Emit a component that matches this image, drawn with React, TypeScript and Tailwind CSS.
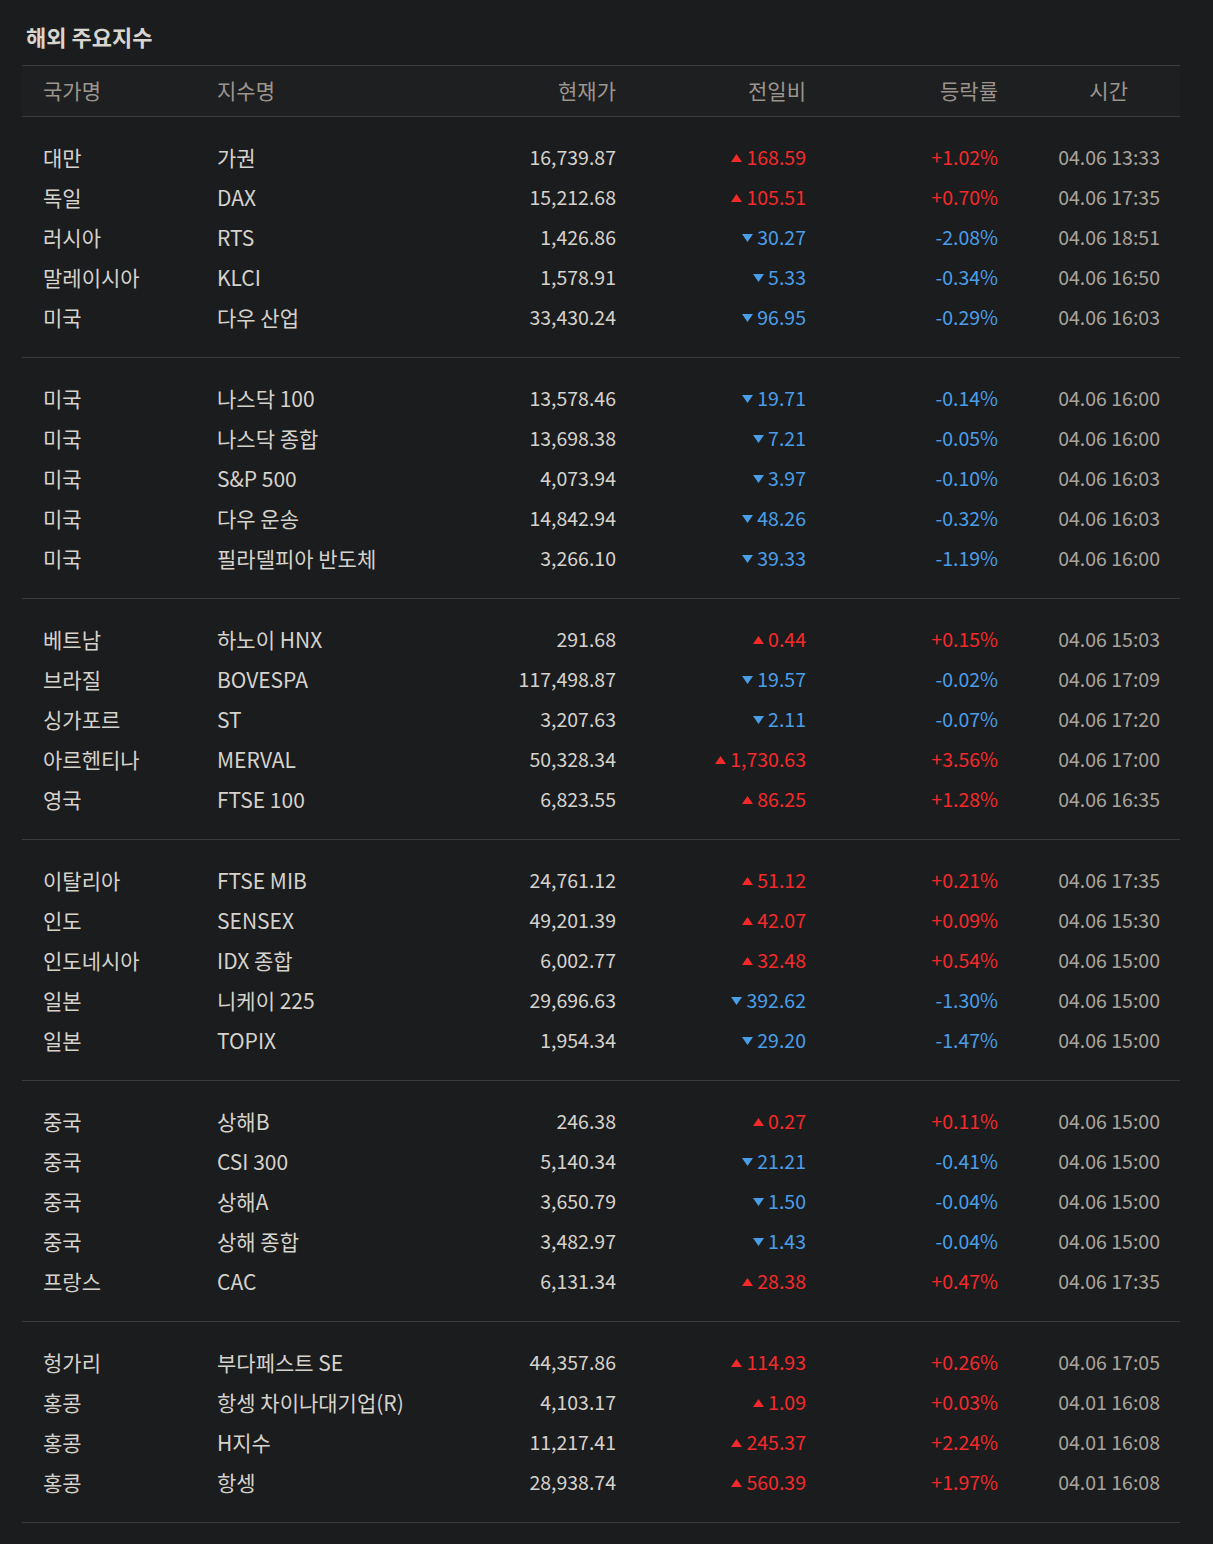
import React from 'react';

type Row = {
  country: string;
  name: string;
  price: string;
  change: string;
  rate: string;
  time: string;
};

const groups: Row[][] = [
  [
    { country: '대만', name: '가권', price: '16,739.87', change: '168.59', rate: '+1.02%', time: '04.06 13:33' },
    { country: '독일', name: 'DAX', price: '15,212.68', change: '105.51', rate: '+0.70%', time: '04.06 17:35' },
    { country: '러시아', name: 'RTS', price: '1,426.86', change: '30.27', rate: '-2.08%', time: '04.06 18:51' },
    { country: '말레이시아', name: 'KLCI', price: '1,578.91', change: '5.33', rate: '-0.34%', time: '04.06 16:50' },
    { country: '미국', name: '다우 산업', price: '33,430.24', change: '96.95', rate: '-0.29%', time: '04.06 16:03' },
  ],
  [
    { country: '미국', name: '나스닥 100', price: '13,578.46', change: '19.71', rate: '-0.14%', time: '04.06 16:00' },
    { country: '미국', name: '나스닥 종합', price: '13,698.38', change: '7.21', rate: '-0.05%', time: '04.06 16:00' },
    { country: '미국', name: 'S&P 500', price: '4,073.94', change: '3.97', rate: '-0.10%', time: '04.06 16:03' },
    { country: '미국', name: '다우 운송', price: '14,842.94', change: '48.26', rate: '-0.32%', time: '04.06 16:03' },
    { country: '미국', name: '필라델피아 반도체', price: '3,266.10', change: '39.33', rate: '-1.19%', time: '04.06 16:00' },
  ],
  [
    { country: '베트남', name: '하노이 HNX', price: '291.68', change: '0.44', rate: '+0.15%', time: '04.06 15:03' },
    { country: '브라질', name: 'BOVESPA', price: '117,498.87', change: '19.57', rate: '-0.02%', time: '04.06 17:09' },
    { country: '싱가포르', name: 'ST', price: '3,207.63', change: '2.11', rate: '-0.07%', time: '04.06 17:20' },
    { country: '아르헨티나', name: 'MERVAL', price: '50,328.34', change: '1,730.63', rate: '+3.56%', time: '04.06 17:00' },
    { country: '영국', name: 'FTSE 100', price: '6,823.55', change: '86.25', rate: '+1.28%', time: '04.06 16:35' },
  ],
  [
    { country: '이탈리아', name: 'FTSE MIB', price: '24,761.12', change: '51.12', rate: '+0.21%', time: '04.06 17:35' },
    { country: '인도', name: 'SENSEX', price: '49,201.39', change: '42.07', rate: '+0.09%', time: '04.06 15:30' },
    { country: '인도네시아', name: 'IDX 종합', price: '6,002.77', change: '32.48', rate: '+0.54%', time: '04.06 15:00' },
    { country: '일본', name: '니케이 225', price: '29,696.63', change: '392.62', rate: '-1.30%', time: '04.06 15:00' },
    { country: '일본', name: 'TOPIX', price: '1,954.34', change: '29.20', rate: '-1.47%', time: '04.06 15:00' },
  ],
  [
    { country: '중국', name: '상해B', price: '246.38', change: '0.27', rate: '+0.11%', time: '04.06 15:00' },
    { country: '중국', name: 'CSI 300', price: '5,140.34', change: '21.21', rate: '-0.41%', time: '04.06 15:00' },
    { country: '중국', name: '상해A', price: '3,650.79', change: '1.50', rate: '-0.04%', time: '04.06 15:00' },
    { country: '중국', name: '상해 종합', price: '3,482.97', change: '1.43', rate: '-0.04%', time: '04.06 15:00' },
    { country: '프랑스', name: 'CAC', price: '6,131.34', change: '28.38', rate: '+0.47%', time: '04.06 17:35' },
  ],
  [
    { country: '헝가리', name: '부다페스트 SE', price: '44,357.86', change: '114.93', rate: '+0.26%', time: '04.06 17:05' },
    { country: '홍콩', name: '항셍 차이나대기업(R)', price: '4,103.17', change: '1.09', rate: '+0.03%', time: '04.01 16:08' },
    { country: '홍콩', name: 'H지수', price: '11,217.41', change: '245.37', rate: '+2.24%', time: '04.01 16:08' },
    { country: '홍콩', name: '항셍', price: '28,938.74', change: '560.39', rate: '+1.97%', time: '04.01 16:08' },
  ],
];

const cols = 'grid grid-cols-[195px_179px_220px_190px_192px_182px]';

function Arrow({ up }: { up: boolean }) {
  return (
    <svg width="11" height="8" viewBox="0 0 11 8" className="mr-[4px] mt-[2px] shrink-0">
      {up ? (
        <polygon points="5.5,0 11,8 0,8" fill="#f42a2a" />
      ) : (
        <polygon points="0,0 11,0 5.5,8" fill="#4a9ee8" />
      )}
    </svg>
  );
}

export default function App() {
  return (
    <div
      className="min-h-[1544px] w-full bg-[#1b1c1e] px-[22px] pb-[21px] text-[19.5px] text-[#d6d2cc]"
      style={{ fontFamily: '"Noto Sans CJK KR", "Noto Sans", sans-serif' }}
    >
      <h1 className="pt-[22px] pb-[15px] pl-[4px] text-[22px] font-bold leading-[28px] text-[#d8d4ce]">
        해외 주요지수
      </h1>

      <div className="w-[1158px]">
        {/* Header */}
        <div className={`${cols} h-[52px] items-center border-y border-[#3a3a3a] bg-[#1e1f21] text-[21px] text-[#9c958d]`}>
          <div className="pl-[21px]">국가명</div>
          <div>지수명</div>
          <div className="text-right">현재가</div>
          <div className="text-right">전일비</div>
          <div className="text-right">등락률</div>
          <div className="pr-[52px] text-right">시간</div>
        </div>

        {groups.map((group, gi) => (
          <div key={gi} className="border-b border-[#3a3a3a] py-[20px]">
            {group.map((row, ri) => {
              const up = row.rate.startsWith('+');
              const color = up ? 'text-[#f42a2a]' : 'text-[#4a9ee8]';
              return (
                <div
                  key={ri}
                  className={`${cols} h-[40px] grid-rows-[40px] items-center whitespace-nowrap leading-[40px]`}
                >
                  <div className="pl-[21px] text-[21px]">{row.country}</div>
                  <div className="text-[21px]">{row.name}</div>
                  <div className="text-right">{row.price}</div>
                  <div className={`flex items-center justify-end ${color}`}>
                    <Arrow up={up} />
                    <span>{row.change}</span>
                  </div>
                  <div className={`text-right ${color}`}>{row.rate}</div>
                  <div className="pr-[20px] text-right text-[#aaa49c]">{row.time}</div>
                </div>
              );
            })}
          </div>
        ))}
      </div>
    </div>
  );
}
